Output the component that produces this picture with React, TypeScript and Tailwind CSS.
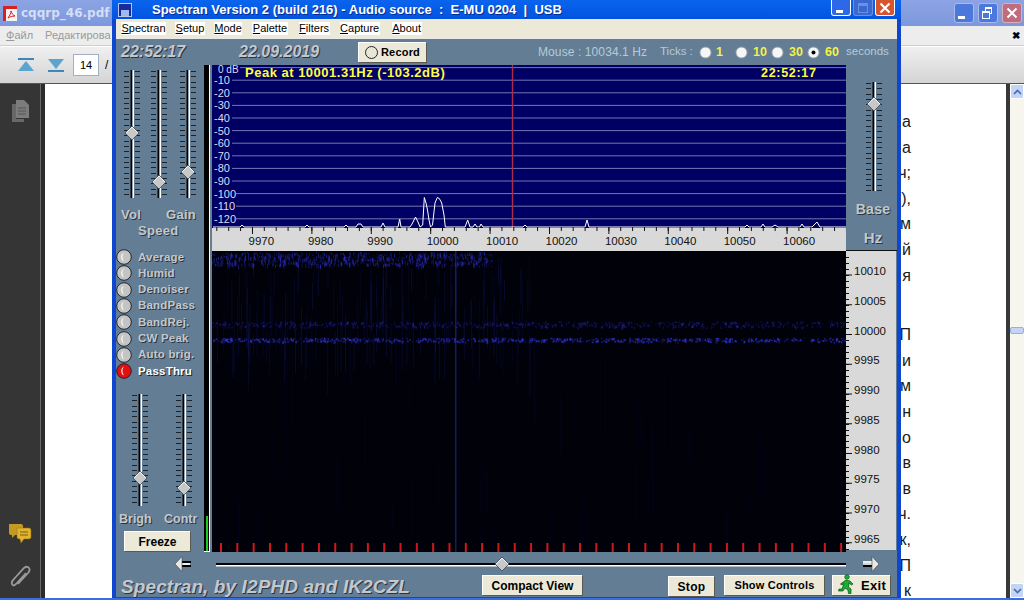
import React from 'react';

const FONT = "font-['Liberation_Sans',Arial,sans-serif]";
const LABEL = `${FONT} font-bold text-[#c4c8cc] [text-shadow:1px_1px_0_#2c3440]`;

// seeded noise so the waterfall is the same on every load
function makeRand(seed: number) {
  let s = seed;
  return () => {
    s = (s * 16807) % 2147483647;
    return (s - 1) / 2147483646;
  };
}

function Thumb({ cx, cy }: { cx: number; cy: number }) {
  return (
    <g>
      <polygon points={`${cx},${cy - 7} ${cx + 7},${cy} ${cx},${cy + 7} ${cx - 7},${cy}`} fill="#c8c8c8" stroke="#3a4650" strokeWidth="0.8" />
      <polyline points={`${cx - 6},${cy} ${cx},${cy - 6} ${cx + 6},${cy}`} fill="none" stroke="#f4f4f4" strokeWidth="1" />
    </g>
  );
}

function VSlider({ h, pos }: { h: number; pos: number }) {
  const ticks = [];
  for (let y = 1; y < h; y += 5.35) ticks.push(Math.round(y) + 0.5);
  return (
    <svg width="24" height={h} className="shrink-0 block overflow-visible">
      {ticks.map((y) => (
        <g key={y} stroke="#1c2228" strokeWidth="1">
          <line x1="4" x2="9" y1={y} y2={y} />
          <line x1="15" x2="20" y1={y} y2={y} />
        </g>
      ))}
      <rect x="10.5" y="0" width="2" height={h} fill="#000" />
      <rect x="12.5" y="0" width="1.5" height={h} fill="#fff" />
      <Thumb cx={12} cy={pos} />
    </svg>
  );
}

function Led({ on, label }: { on?: boolean; label: string }) {
  return (
    <div className="flex items-center h-[16.3px]">
      <svg width="16" height="16" className="shrink-0">
        <circle cx="8" cy="8" r="7.3" fill={on ? '#e01010' : '#c4c4c4'} stroke="#20262c" strokeWidth="1" />
        <path d="M8 3.5 A5 5 0 0 0 8 12.5 A7 7 0 0 1 8 3.5 Z" fill="#fff" />
      </svg>
      <span className={`${FONT} ml-[6px] text-[11.5px] font-bold tracking-[0.2px] ${on ? 'text-white [text-shadow:1px_1px_0_#222]' : 'text-[#c4c8cc] [text-shadow:1px_1px_0_#2c3440]'}`}>
        {label}
      </span>
    </div>
  );
}

function Btn({ className, children }: { className: string; children: React.ReactNode }) {
  return (
    <div className={`${FONT} flex items-center justify-center h-5 bg-[#ece9d8] text-black font-bold border-t border-l border-t-white border-l-white shadow-[1px_1px_0_#5a5a50] ${className}`}>
      {children}
    </div>
  );
}

function Radio({ on }: { on?: boolean }) {
  return (
    <svg width="13" height="13" className="shrink-0">
      <circle cx="6.5" cy="6.5" r="5.6" fill="#f6f6f6" stroke="#8a9aa6" strokeWidth="1" />
      {on && <circle cx="6.5" cy="6.5" r="2" fill="#000" />}
    </svg>
  );
}

function XpButton({ className, children }: { className: string; children: React.ReactNode }) {
  return (
    <div className={`flex items-center justify-center w-5 h-[16px] rounded-b-[3px] border border-t-0 ${className}`}>
      {children}
    </div>
  );
}

// trace points are read off the screenshot, in screen pixels
const TRACE: [number, number][] = [
  [213, 227], [240, 227], [242, 225], [244, 227], [305, 227], [307, 225], [309, 227], [344, 227], [346, 225], [348, 227],
  [356, 227], [358, 224], [361, 224], [363, 227], [381, 227], [383, 223], [385, 227], [398, 227], [399.7, 219], [401, 227],
  [410, 227], [412, 224], [415.5, 217], [418, 222], [420, 227], [422.7, 225], [424.3, 197.5], [426, 203], [427.5, 210],
  [429, 220], [430.5, 227], [432.5, 225], [435, 203], [437.3, 197.5], [439.3, 198.5], [441.7, 203], [444, 215], [445.3, 227],
  [465, 227], [467.7, 220], [470, 227], [473, 227], [475, 224], [477, 227], [479.5, 227], [481, 224], [483, 227],
  [523, 227], [525, 225], [527, 227], [585, 227], [587, 220], [589, 227], [745, 227], [747, 225], [749, 227],
  [761, 227], [763, 224], [765, 227], [772, 227], [775, 225], [778, 227], [800, 227], [802, 224], [804, 227],
  [812, 227], [814, 225], [817, 222], [820, 227], [846, 227],
];

function Spectrum() {
  const dbs = ['0 dB', '-10', '-20', '-30', '-40', '-50', '-60', '-70', '-80', '-90', '-100', '-110', '-120'];
  const labels = [9970, 9980, 9990, 10000, 10010, 10020, 10030, 10040, 10050, 10060];
  const minor = [];
  for (let i = 0; i < 54; i++) minor.push(4.8 + 11.88 * i);
  const trace = TRACE.map(([x, y], i) => `${i ? 'L' : 'M'}${x - 212} ${y - 65}`).join(' ');
  return (
    <svg width="634" height="186" className="block">
      <rect width="634" height="163" fill="#000064" />
      {dbs.map((d, i) => {
        const y = 2.6 + i * 12.6;
        return (
          <g key={d}>
            <line x1={i === 0 ? 28 : i > 9 ? 24 : 20} x2="634" y1={y} y2={y} stroke="#7474b4" strokeWidth="1" />
            <text x={i === 0 ? 6 : 2} y={i === 0 ? 8 : y + 4} fill="#dcdcf0" fontSize={i === 0 ? 10 : 11} fontFamily="'Liberation Sans',Arial,sans-serif">
              {d}
            </text>
          </g>
        );
      })}
      <line x1="300.5" x2="300.5" y1="0" y2="163" stroke="#b02a4a" strokeWidth="1.4" />
      <path d={trace} fill="none" stroke="#fff" strokeWidth="1" strokeLinejoin="round" />
      <rect y="163" width="634" height="23" fill="#d9d9d9" />
      {minor.map((x) => (
        <line key={x} x1={x} x2={x} y1="162" y2="166" stroke="#111" strokeWidth="1" />
      ))}
      {labels.map((l, i) => {
        const x = 40.5 + i * 59.4;
        return (
          <g key={l}>
            <line x1={x} x2={x} y1="162" y2="169" stroke="#111" strokeWidth="1" />
            <text x={x - 4} y="180" fill="#111" fontSize="11.5" fontFamily="'Liberation Sans',Arial,sans-serif">
              {l}
            </text>
          </g>
        );
      })}
    </svg>
  );
}

function Waterfall() {
  const r = makeRand(77);
  const dots: { x: number; y: number; w: number; h: number; o: number }[] = [];
  // top sweep, only the part already scrolled in
  for (let i = 0; i < 800; i++) {
    dots.push({ x: r() * 280, y: 1 + r() * 13, w: 1, h: 1 + r() * 4, o: 0.15 + r() * 0.4 });
  }
  // the two carrier bands
  for (let i = 0; i < 800; i++) {
    dots.push({ x: r() * 634, y: 70 + r() * 6, w: 1 + r(), h: 1 + r() * 2, o: 0.08 + r() * 0.25 });
    dots.push({ x: r() * 634, y: 86.5 + r() * 4, w: 1 + r(), h: 1 + r() * 1.5, o: 0.22 + r() * 0.45 });
  }
  // faint vertical streaks, stronger to the left and above the bands
  const streaks: { x: number; y: number; h: number; o: number }[] = [];
  for (let i = 0; i < 170; i++) {
    streaks.push({ x: r() * 320, y: r() * 90, h: 20 + r() * 40, o: 0.08 + r() * 0.14 });
  }
  for (let i = 0; i < 90; i++) {
    streaks.push({ x: r() * 560, y: 90 + r() * 190, h: 30 + r() * 60, o: 0.03 + r() * 0.06 });
  }
  const ticks = [];
  for (let i = 0; i < 39; i++) ticks.push(8 + i * 16.32);
  return (
    <svg width="634" height="301" className="block">
      <defs>
        <filter id="soft">
          <feGaussianBlur stdDeviation="0.5" />
        </filter>
      </defs>
      <rect width="634" height="301" fill="#01010a" />
      {streaks.map((s, i) => (
        <rect key={i} x={s.x} y={s.y} width="1" height={s.h} fill="#2430a0" opacity={s.o} />
      ))}
      <rect x="243" width="1.5" height="301" fill="#1c2470" opacity="0.8" />
      <g filter="url(#soft)">
        {dots.map((d, i) => (
          <rect key={i} x={d.x} y={d.y} width={d.w} height={d.h} fill="#3438e0" opacity={d.o} />
        ))}
      </g>
      {ticks.map((x) => (
        <rect key={x} x={x} y="292" width="2" height="9" fill="#d01818" />
      ))}
    </svg>
  );
}

function FreqAxis() {
  const labels = [10010, 10005, 10000, 9995, 9990, 9985, 9980, 9975, 9970, 9965];
  const minor = [];
  for (let y = 6; y < 298; y += 5.95) minor.push(Math.round(y) + 0.5);
  return (
    <svg width="50" height="299" className="block bg-[#d9d9d9]">
      {minor.map((y) => (
        <line key={y} x1="0" x2="3" y1={y} y2={y} stroke="#111" />
      ))}
      {labels.map((l, i) => {
        const y = 24 + i * 29.75;
        return (
          <g key={l}>
            <line x1="0" x2="6" y1={y} y2={y} stroke="#111" />
            <text x="8" y={y} fill="#111" fontSize="11.5" fontFamily="'Liberation Sans',Arial,sans-serif">
              {l}
            </text>
          </g>
        );
      })}
    </svg>
  );
}

function Runner() {
  return (
    <svg width="18" height="20" viewBox="0 0 18 20" className="mr-[6px] -mt-[3px]">
      <circle cx="10" cy="3" r="2.3" fill="#18b030" stroke="#064a14" strokeWidth="0.6" />
      <path d="M9 6 L13 7 L16 10 L14.5 11 L12 9 L11.5 13 L14 15 L14 19.5 L11.5 19.5 L11 16 L8 14 L6 17 L1.5 17 L2 15 L5 15 L7 9.5 L5 11 L3.5 10 Z" fill="#18b030" stroke="#064a14" strokeWidth="0.7" />
    </svg>
  );
}

function ArrowLeft() {
  return (
    <svg width="16" height="16" className="shrink-0">
      <rect x="6" y="5" width="10" height="2" fill="#000" />
      <rect x="6" y="9" width="10" height="2" fill="#000" />
      <rect x="6" y="7" width="9" height="2" fill="#eee" />
      <polygon points="0,8 7,0.5 7,15.5" fill="#e8e8e8" stroke="#444" strokeWidth="0.6" />
    </svg>
  );
}

function ArrowRight() {
  return (
    <svg width="16" height="16" className="shrink-0">
      <rect x="0" y="5" width="10" height="2" fill="#eee" />
      <rect x="0" y="7" width="10" height="2" fill="#d4d4d4" />
      <rect x="0" y="9" width="10" height="2" fill="#000" />
      <polygon points="16,8 9,0.5 9,15.5" fill="#e8e8e8" stroke="#444" strokeWidth="0.6" />
    </svg>
  );
}

function SpectranWindow() {
  const menu = [
    ['S', 'pectran', 'ml-[5px]'],
    ['S', 'etup', 'ml-[9px]'],
    ['M', 'ode', 'ml-[9px]'],
    ['P', 'alette', 'ml-[10px]'],
    ['F', 'ilters', 'ml-[11px]'],
    ['C', 'apture', 'ml-[10px]'],
    ['A', 'bout', 'ml-[12px]'],
  ];
  return (
    <div className="absolute left-[112px] top-0 w-[789px] h-[600px] flex flex-col bg-[#0f46d0] px-[4px] pb-[3px]">
      {/* title bar */}
      <div className="-mx-[4px] h-[19px] shrink-0 flex items-center bg-gradient-to-b from-[#0a64ee] to-[#0354e0] pl-[6px]">
        <div className="w-[14px] h-[14px] bg-[#1a2a9a] border border-[#b8c4e8] flex items-end justify-center shrink-0">
          <div className="w-[8px] h-[6px] bg-[#a0b8f0]" />
        </div>
        <div className={`${FONT} ml-[20px] text-white font-bold text-[13px] whitespace-pre [text-shadow:1px_1px_0_#0a2a90]`}>
          Spectran Version 2 (build 216) - Audio source  :  E-MU 0204  |  USB
        </div>
        <div className="ml-auto flex gap-[2px] pr-[6px] self-start">
          <XpButton className="bg-[#2c68e8] border-white">
            <div className="w-[7px] h-[3px] bg-white mt-[7px] -ml-[4px]" />
          </XpButton>
          <XpButton className="bg-[#3a68d0] border-[#6a90e0]">
            <div className="w-[10px] h-[10px] border border-[#6a90e0] border-t-[3px]" />
          </XpButton>
          <XpButton className="bg-[#d8542c] border-white">
            <svg width="12" height="12" viewBox="0 0 12 12">
              <path d="M1.5 1.5 L10.5 10.5 M10.5 1.5 L1.5 10.5" stroke="#fff" strokeWidth="2.2" />
            </svg>
          </XpButton>
        </div>
      </div>

      {/* menu */}
      <div className={`${FONT} h-[19px] shrink-0 flex items-center bg-[#ece9d8] text-[11px] text-black`}>
        {menu.map(([first, rest, gap]) => (
          <span key={first + rest} className={`${gap} bg-white leading-[13px] px-[0.5px]`}>
            <span className="underline">{first}</span>
            {rest}
          </span>
        ))}
      </div>

      <div className="flex-1 min-h-0 flex flex-col bg-[#627d94] border-t border-t-[#e8e8e8]">
        {/* clock, record, mouse readout, tick radios */}
        <div className="h-[26px] shrink-0 flex items-center pl-[5px]">
          <span className={`${LABEL} italic text-[16px] w-[118px] shrink-0`}>22:52:17</span>
          <span className={`${LABEL} italic text-[16px] w-[119px] shrink-0`}>22.09.2019</span>
          <Btn className="w-[68px] shrink-0 text-[11px] tracking-[0.2px]">
            <span className="w-[13px] h-[13px] rounded-full border border-[#222] bg-[#e8e6d6] mr-[3px]" />
            Record
          </Btn>
          <span className={`${FONT} ml-[112px] w-[122px] shrink-0 text-[12px] tracking-[0.1px] text-[#b8cad8]`}>Mouse : 10034.1 Hz</span>
          <span className={`${FONT} w-[39px] shrink-0 text-[11.5px] text-[#b8cad8]`}>Ticks :</span>
          <div className={`${FONT} flex items-center text-[12.5px] font-bold text-[#f4f04a]`}>
            <Radio />
            <span className="ml-[4px] w-[19px]">1</span>
            <Radio />
            <span className="ml-[5px] w-[18px]">10</span>
            <Radio />
            <span className="ml-[5px] w-[18px]">30</span>
            <Radio on />
            <span className="ml-[5px] w-[21px]">60</span>
          </div>
          <span className={`${FONT} text-[11.5px] text-[#b8cad8]`}>seconds</span>
        </div>

        <div className="h-[487px] shrink-0 flex">
          {/* left controls */}
          <div className="w-[88px] shrink-0 flex flex-col">
            <div className="flex mt-[5px] pl-[4px] gap-[3px]">
              <VSlider h={128} pos={63} />
              <VSlider h={128} pos={112} />
              <div className="ml-[2px]">
                <VSlider h={128} pos={102} />
              </div>
            </div>
            <div className={`${LABEL} mt-[7px] h-[16px] pl-[5px] text-[13px] flex tracking-[0.3px]`}>
              <span className="w-[45px]">Vol</span>
              <span>Gain</span>
            </div>
            <div className={`${LABEL} h-[15px] pl-[22px] text-[13px] tracking-[0.3px]`}>Speed</div>
            <div className="mt-[13px]">
              <Led label="Average" />
              <Led label="Humid" />
              <Led label="Denoiser" />
              <Led label="BandPass" />
              <Led label="BandRej." />
              <Led label="CW Peak" />
              <Led label="Auto brig." />
              <Led label="PassThru" on />
            </div>
            <div className="flex mt-[15px] pl-[12px] gap-[20px]">
              <VSlider h={112} pos={84} />
              <VSlider h={112} pos={94} />
            </div>
            <div className={`${LABEL} mt-[4px] h-[16px] pl-[3px] text-[12.5px] flex`}>
              <span className="w-[45px]">Brigh</span>
              <span>Contr</span>
            </div>
            <div className="mt-[5px] pl-[8px]">
              <Btn className="w-[66px] text-[12px]">Freeze</Btn>
            </div>
          </div>

          {/* level meter */}
          <div className="w-[6px] shrink-0 mr-[2px] bg-black border-r border-b border-r-white border-b-white flex flex-col justify-end items-center">
            <div className="w-[2px] h-[35px] bg-[#1ec81e]" />
          </div>

          {/* spectrum and waterfall */}
          <div className="w-[634px] shrink-0 relative">
            <Spectrum />
            <Waterfall />
            <div className={`${FONT} absolute left-[33px] -top-px text-[13px] leading-[17px] font-bold tracking-[0.5px] text-[#ffff40]`}>
              Peak at 10001.31Hz (-103.2dB)
            </div>
            <div className={`${FONT} absolute left-[549px] top-0 text-[12.5px] leading-[17px] font-bold tracking-[0.7px] text-[#ffff40]`}>
              22:52:17
            </div>
          </div>

          {/* base control and frequency axis */}
          <div className="flex-1 min-w-0 flex flex-col">
            <div className="h-[186px] shrink-0 flex flex-col border-b border-b-[#111]">
              <div className="mt-[17px] pl-[16px]">
                <VSlider h={109} pos={22} />
              </div>
              <div className={`${LABEL} mt-[10px] text-center pl-[3px] text-[14px] tracking-[0.3px] leading-[16px]`}>Base</div>
              <div className={`${LABEL} mt-[12px] text-center pl-[3px] text-[15px] leading-[18px]`}>Hz</div>
            </div>
            <FreqAxis />
          </div>
        </div>

        {/* scroll row */}
        <div className="h-[23px] shrink-0 flex items-center pl-[59px]">
          <ArrowLeft />
          <svg width="630" height="14" className="ml-[25px] mr-[17px] shrink-0">
            <rect y="6" width="630" height="2" fill="#000" />
            <rect y="8" width="630" height="1.5" fill="#fff" />
            <Thumb cx={286} cy={7} />
          </svg>
          <ArrowRight />
        </div>

        {/* footer */}
        <div className="flex-1 min-h-0 flex items-start pl-[5px]">
          <span className={`${LABEL} italic text-[19px] leading-[24px] w-[361px] shrink-0 tracking-[0.1px] whitespace-nowrap`}>
            Spectran, by I2PHD and IK2CZL
          </span>
          <Btn className="w-[100px] shrink-0 text-[12px]">Compact View</Btn>
          <Btn className="w-[46px] shrink-0 ml-[86px] mt-[1px] text-[12px] tracking-[0.3px]">Stop</Btn>
          <Btn className="w-[100px] shrink-0 ml-[10px] text-[11px] tracking-[0.2px]">Show Controls</Btn>
          <Btn className="w-[58px] shrink-0 ml-[8px] text-[13px] tracking-[0.3px]">
            <Runner />
            Exit
          </Btn>
        </div>
      </div>
    </div>
  );
}

function PdfWindow() {
  const lines = ['а', 'а', 'ч;', '),', 'м', 'й', 'я'];
  const lines2 = ['П', 'и', 'м', 'н', 'о', 'в', 'в', 'ч.', 'к,', 'П', 'к'];
  return (
    <div className="w-[1024px] h-[600px] flex flex-col overflow-hidden bg-white">
      <div className="h-[26px] shrink-0 flex items-center bg-gradient-to-b from-[#8ca4e4] to-[#7c98dc] pl-[3px]">
        <div className="w-[14px] h-[15px] bg-[#f4f4f4] border-t-[3px] border-l-[3px] border-t-[#d82020] border-l-[#d82020] flex items-center justify-center">
          <svg width="9" height="9" viewBox="0 0 9 9">
            <path d="M1 8 C3 5 4 3 4 1 C5 4 6 5 8 6 C5 6 3 7 1 8 Z" fill="none" stroke="#d82020" strokeWidth="1" />
          </svg>
        </div>
        <span className="ml-[4px] font-['DejaVu_Sans',sans-serif] font-bold text-[12px] text-[#d4def4]">cqqrp_46.pdf</span>
        <div className="ml-auto flex gap-[4px] pr-[2px]">
          <div className="w-[20px] h-[20px] rounded-[3px] bg-[#4c78dc] border border-[#a8bcec] flex items-end justify-center pb-[3px] pr-[5px]">
            <div className="w-[7px] h-[3px] bg-white" />
          </div>
          <div className="w-[20px] h-[20px] rounded-[3px] bg-[#4c78dc] border border-[#a8bcec] relative">
            <div className="absolute left-[6px] top-[3px] w-[7px] h-[7px] border border-white border-t-2" />
            <div className="absolute left-[3px] top-[7px] w-[8px] h-[8px] border border-white border-t-2 bg-[#4c78dc]" />
          </div>
          <div className="w-[20px] h-[20px] rounded-[3px] bg-[#c06c80] border border-[#d8b0b8] flex items-center justify-center">
            <svg width="12" height="12" viewBox="0 0 12 12">
              <path d="M1.5 1.5 L10.5 10.5 M10.5 1.5 L1.5 10.5" stroke="#fff" strokeWidth="2" />
            </svg>
          </div>
        </div>
      </div>
      <div className={`${FONT} h-[20px] shrink-0 flex items-center bg-[#ededed] text-[11px] text-[#9a9a9a] pl-[6px] pr-[4px] border-b border-b-[#cfcfcf]`}>
        <span className="underline decoration-[#9a9a9a]">Ф</span>айл
        <span className="ml-[12px]">Редактирова</span>
        <span className="ml-auto text-[10px] font-bold text-black leading-none">✖</span>
      </div>
      <div className="h-[38px] shrink-0 flex items-center bg-gradient-to-b from-[#f0f0f0] to-[#d4d4d4] border-t border-t-white border-b border-b-[#555] pl-[18px]">
        <svg width="16" height="14" viewBox="0 0 16 14" className="shrink-0">
          <rect width="16" height="2" fill="#3c88bc" />
          <polygon points="8,3 16,13 0,13" fill="#5ca4d0" />
        </svg>
        <svg width="16" height="14" viewBox="0 0 16 14" className="ml-[14px] shrink-0">
          <polygon points="8,11 16,1 0,1" fill="#5ca4d0" />
          <rect y="12" width="16" height="2" fill="#3c88bc" />
        </svg>
        <div className={`${FONT} ml-[9px] w-[26px] h-[22px] bg-white border border-[#a0b0c0] flex items-center justify-center text-[11px] text-black`}>14</div>
        <span className={`${FONT} ml-[6px] text-[12px] text-black`}>/</span>
      </div>
      <div className="flex-1 min-h-0 flex">
        <div className="w-[41px] shrink-0 bg-[#353535] flex flex-col items-center pt-[16px] pb-[12px] border-r border-r-[#6a6a6a]">
          <svg width="18" height="22" viewBox="0 0 18 22">
            <path d="M5 0 H13 L18 5 V18 H5 Z" fill="#7c7c7c" />
            <path d="M1 4 H5 V19 H13 V22 H1 Z" fill="#686868" />
            <path d="M7 8 H15 M7 11 H15 M7 14 H15" stroke="#555" />
          </svg>
          <svg width="24" height="22" viewBox="0 0 24 22" className="mt-auto mb-[20px]">
            <path d="M1 1 H13 Q15 1 15 3 V10 Q15 12 13 12 H7 L4 15 V12 H3 Q1 12 1 10 Z" fill="#c49a24" />
            <path d="M9 5 H21 Q23 5 23 7 V14 Q23 16 21 16 H16 L13 20 L12 16 H11 Q9 16 9 14 Z" fill="#e0b430" stroke="#8a6c14" strokeWidth="0.5" />
            <path d="M12 9 H20 M12 12 H20" stroke="#7a5c10" />
          </svg>
          <svg width="21" height="23" viewBox="0 0 21 23">
            <path d="M16 7 L6 18 Q3 21 2 18 Q1 16 4 13 L14 2 Q17 -0.5 19 2 Q20.5 4 18 7 L8 18" fill="none" stroke="#9a9a9a" strokeWidth="1.8" transform="translate(0 1)" />
          </svg>
        </div>
        <div className="w-[4px] shrink-0 bg-[#2c2c2c]" />
        <div className={`${FONT} flex-1 min-w-0 bg-white pt-[25px] text-[16px] leading-[25.6px] text-[#1a1a1a]`}>
          <div className="w-[866px] text-right">
            {lines.map((l, i) => (
              <div key={i}>{l}</div>
            ))}
            <div className="h-[34px]" />
            {lines2.map((l, i) => (
              <div key={i}>{l}</div>
            ))}
          </div>
        </div>
        <div className="w-[4px] shrink-0 bg-[#383838]" />
        <div className="w-[14px] shrink-0 bg-[#f6f5ee] flex flex-col items-center">
          <div className="w-[14px] h-[15px] rounded-[2px] bg-[#c4d4f4] border border-white flex items-center justify-center">
            <svg width="9" height="6" viewBox="0 0 9 6"><path d="M1 5 L4.5 1.5 L8 5" fill="none" stroke="#4a68b0" strokeWidth="1.6" /></svg>
          </div>
          <div className="mt-[228px] w-[14px] h-[7px] rounded-[2px] bg-[#c4d4f4] border border-[#98b0e0]" />
          <div className="mt-auto mb-[2px] w-[14px] h-[15px] rounded-[2px] bg-[#c4d4f4] border border-white flex items-center justify-center">
            <svg width="9" height="6" viewBox="0 0 9 6"><path d="M1 1 L4.5 4.5 L8 1" fill="none" stroke="#4a68b0" strokeWidth="1.6" /></svg>
          </div>
        </div>
      </div>
    </div>
  );
}

export default function App() {
  return (
    <div className="relative w-[1024px] h-[600px] overflow-hidden">
      <PdfWindow />
      <SpectranWindow />
      <div className="absolute left-0 right-0 bottom-0 h-[2px] bg-[#3a6ee0]" />
    </div>
  );
}
